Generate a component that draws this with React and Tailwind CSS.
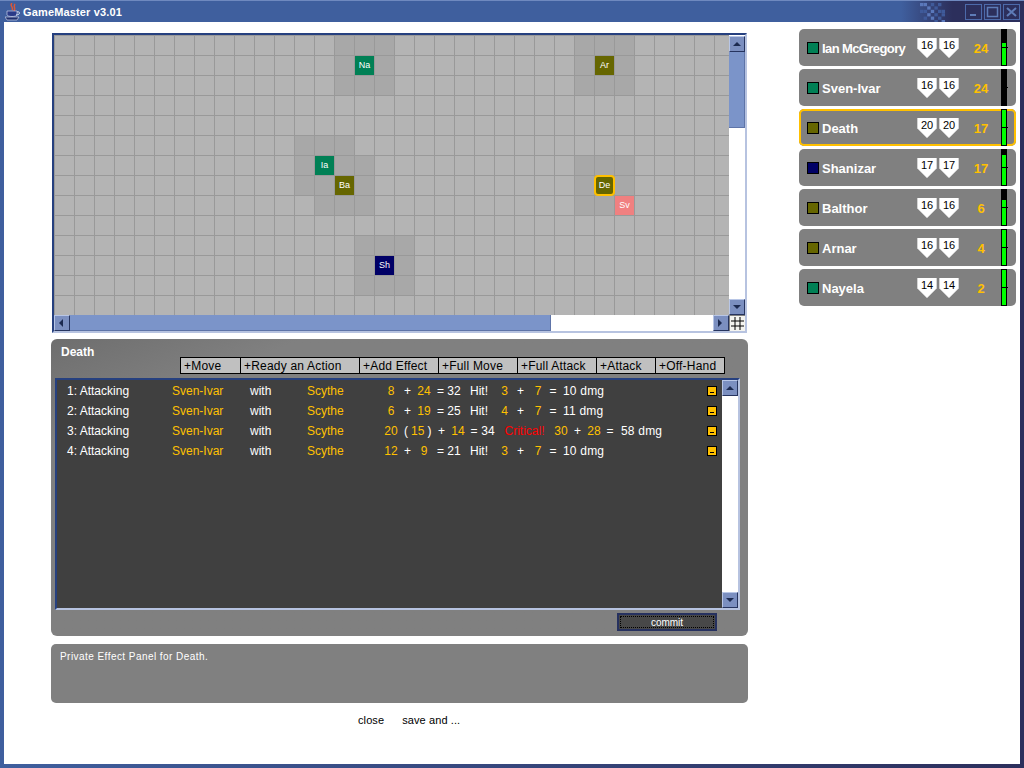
import React from "react";

const tokens = {
  "1-15": { t: "Na", c: "bg-[#008055]" },
  "1-27": { t: "Ar", c: "bg-[#666600]" },
  "6-13": { t: "Ia", c: "bg-[#008055]" },
  "7-14": { t: "Ba", c: "bg-[#666600]" },
  "7-27": { t: "De", c: "bg-[#666600]", sel: true },
  "8-28": { t: "Sv", c: "bg-[#f08080]" },
  "11-16": { t: "Sh", c: "bg-[#000066]" },
};
const centres = [[1, 15], [1, 27], [6, 13], [7, 14], [7, 27], [11, 16]];
const isDark = (r, c) => centres.some(([a, b]) => Math.abs(a - r) <= 1 && Math.abs(b - c) <= 1);

function Arrow({ dir }) {
  const pts = { up: "1,6 5,2 9,6", down: "1,2 5,6 9,2", left: "6,0 2,4 6,8", right: "2,0 6,4 2,8" }[dir];
  return (
    <svg width="10" height="8" viewBox="0 0 10 8" className="block">
      <polygon points={pts} fill="#1c2a50" />
    </svg>
  );
}

function ScrollBtn({ dir }) {
  return (
    <div className="w-4 h-4 shrink-0 flex items-center justify-center bg-[#7b8fc0] border-t border-l border-t-[#b8c6e6] border-l-[#b8c6e6] border-r border-b border-r-[#26345f] border-b-[#26345f]">
      <Arrow dir={dir} />
    </div>
  );
}

function MapView() {
  const rows = Array.from({ length: 14 }, (_, i) => i);
  const cols = Array.from({ length: 34 }, (_, i) => i);
  return (
    <div className="mx-px h-[300px] border-2 border-t-[#26407f] border-l-[#26407f] border-r-[#b7c3e0] border-b-[#b7c3e0] flex flex-col">
      <div className="flex h-[280px]">
        <div className="w-[675px] h-[280px] overflow-hidden grid grid-cols-[repeat(34,20px)] grid-rows-[repeat(14,20px)] shrink-0">
          {rows.map((r) =>
            cols.map((c) => {
              const tok = tokens[`${r}-${c}`];
              return (
                <div
                  key={`${r}-${c}`}
                  className={`relative w-5 h-5 border-l border-t border-[#999999] ${isDark(r, c) ? "bg-[#a8a8a8]" : "bg-[#b4b4b4]"}`}
                >
                  {tok && !tok.sel && (
                    <div className={`w-[19px] h-[19px] flex items-center justify-center pt-px text-white text-[9px] ${tok.c}`}>{tok.t}</div>
                  )}
                  {tok && tok.sel && (
                    <div className={`absolute -left-px -top-px z-10 w-[21px] h-[21px] border-2 border-[#ffc000] rounded-[4px] flex items-center justify-center pt-px text-white text-[9px] ${tok.c}`}>{tok.t}</div>
                  )}
                </div>
              );
            })
          )}
        </div>
        <div className="w-4 flex flex-col bg-white pt-px">
          <ScrollBtn dir="up" />
          <div className="h-[76px] bg-[#7b94c9] border-r border-b border-[#5e74a8]" />
          <div className="flex-1" />
          <ScrollBtn dir="down" />
        </div>
      </div>
      <div className="flex h-4">
        <ScrollBtn dir="left" />
        <div className="w-[481px] bg-[#7b94c9] border-r border-b border-[#5e74a8]" />
        <div className="flex-1 bg-white" />
        <ScrollBtn dir="right" />
        <div className="w-4 h-4 bg-[#f4f4f0] border-t border-l border-[#808080] flex items-center justify-center">
          <svg width="13" height="13" viewBox="0 0 13 13" className="block">
            <path d="M4 0V13M9 0V13M0 4H13M0 9H13" stroke="#000" strokeWidth="1" />
          </svg>
        </div>
      </div>
    </div>
  );
}

const Y = "text-[#ffc000]";
const rowsA = [
  ["1", "8", "24", "32", "3", "7", "10 dmg"],
  ["2", "6", "19", "25", "4", "7", "11 dmg"],
  null,
  ["4", "12", "9", "21", "3", "7", "10 dmg"],
];

function RowStart({ n }) {
  return (
    <>
      <span className="w-[115px] pl-[10px]">{n}: Attacking</span>
      <span className={`w-[78px] ${Y}`}>Sven-Ivar</span>
      <span className="w-[57px]">with</span>
      <span className={`w-[74px] ${Y}`}>Scythe</span>
    </>
  );
}

function Minus() {
  return (
    <div className="ml-auto mr-[5px] w-[10px] h-[10px] bg-[#ffc000] border border-black flex items-end justify-center pb-[2px] shrink-0">
      <div className="w-1 h-px bg-black" />
    </div>
  );
}

function RowA({ d }) {
  return (
    <div className="flex items-center h-5 text-center whitespace-nowrap">
      <div className="text-left flex"><RowStart n={d[0]} /></div>
      <span className={`w-5 ${Y}`}>{d[1]}</span>
      <span className="w-[13px]">+</span>
      <span className={`w-5 ${Y}`}>{d[2]}</span>
      <span className="w-[13px]">=</span>
      <span className="w-[14px]">{d[3]}</span>
      <span className="w-[34px] text-left pl-[9px]">Hit!</span>
      <span className={`w-[19px] ${Y}`}>{d[4]}</span>
      <span className="w-[13px]">+</span>
      <span className={`w-[22px] ${Y}`}>{d[5]}</span>
      <span className="w-2">=</span>
      <span className="pl-[6px] tracking-[0.2px]">{d[6]}</span>
      <Minus />
    </div>
  );
}

function RowCrit() {
  return (
    <div className="flex items-center h-5 text-center whitespace-nowrap">
      <div className="text-left flex"><RowStart n="3" /></div>
      <span className={`w-5 ${Y}`}>20</span>
      <span className="w-[10px]">(</span>
      <span className={`w-[13px] ${Y}`}>15</span>
      <span className="w-[11px]">)</span>
      <span className="w-[13px]">+</span>
      <span className={`w-5 ${Y}`}>14</span>
      <span className="w-3">=</span>
      <span className="w-4">34</span>
      <span className="w-[57px] text-[#ff0000]">Critical!</span>
      <span className={`w-4 ${Y}`}>30</span>
      <span className="w-[17px]">+</span>
      <span className={`w-4 ${Y}`}>28</span>
      <span className="w-4">=</span>
      <span className="pl-[3px] tracking-[0.2px]">58 dmg</span>
      <Minus />
    </div>
  );
}

const actions = [
  ["+Move", "w-[61px]"],
  ["+Ready an Action", "w-[120px]"],
  ["+Add Effect", "w-[80px]"],
  ["+Full Move", "w-[80px]"],
  ["+Full Attack", "w-[80px]"],
  ["+Attack", "w-[60px]"],
  ["+Off-Hand", "w-[70px]"],
];

function ActionPanel() {
  return (
    <div className="h-[297px] rounded-[6px] bg-linear-to-br from-[#6e6e6e] to-[#808080] to-[18%] flex flex-col">
      <div className="h-[18px] pl-[10px] pt-[6px] text-white font-bold text-xs leading-[15px]">Death</div>
      <div className="flex ml-[129px] h-[17px] text-black text-xs tracking-[0.2px]">
        {actions.map(([t, w]) => (
          <div key={t} className={`${w} h-[17px] bg-[#c0c0c0] border border-black pl-[3px] leading-[16px] -mr-px whitespace-nowrap`}>{t}</div>
        ))}
      </div>
      <div className="ml-1 mt-1 w-[685px] h-[232px] border-2 border-t-[#26407f] border-l-[#26407f] border-r-[#b7c3e0] border-b-[#b7c3e0] flex">
        <div className="w-[665px] bg-[#404040] text-white text-xs pt-px">
          {rowsA.map((d, i) => (d ? <RowA key={i} d={d} /> : <RowCrit key={i} />))}
        </div>
        <div className="w-4 bg-white flex flex-col justify-between">
          <ScrollBtn dir="up" />
          <ScrollBtn dir="down" />
        </div>
      </div>
      <div className="flex justify-end mt-[3px] mr-[31px]">
        <div className="w-[100px] h-[18px] border-2 border-[#26315f] bg-[#484848] p-px">
          <div className="h-full border border-dotted border-black text-white text-[10px] leading-[11px] text-center">commit</div>
        </div>
      </div>
    </div>
  );
}

function Shield({ v }) {
  return (
    <div className="relative w-5 h-5 flex justify-center text-[11px] leading-[15px] text-black">
      <svg width="20" height="20" viewBox="0 0 20 20" className="absolute inset-0">
        <path d="M0 0H20V10L10 20L0 10Z" fill="#ffffff" />
        <path d="M0 0H1V10.5L10 19.5L19 10.5V0H20V10L10 20L0 10Z" fill="#d4d4d4" />
      </svg>
      <span className="relative">{v}</span>
    </div>
  );
}

const cards = [
  { n: "Ian McGregory", c: "bg-[#008055]", s: 16, i: 24, top: "h-[13px]", fill: "flex-1", tr: "tracking-[-0.6px]" },
  { n: "Sven-Ivar", c: "bg-[#008055]", s: 16, i: 24, top: "flex-1", fill: "h-0" },
  { n: "Death", c: "bg-[#666600]", s: 20, i: 17, sel: true, top: "h-0", fill: "flex-1" },
  { n: "Shanizar", c: "bg-[#000066]", s: 17, i: 17, top: "h-[5px]", fill: "flex-1" },
  { n: "Balthor", c: "bg-[#666600]", s: 16, i: 6, top: "h-[10px]", fill: "flex-1" },
  { n: "Arnar", c: "bg-[#666600]", s: 16, i: 4, top: "h-0", fill: "flex-1" },
  { n: "Nayela", c: "bg-[#008055]", s: 14, i: 2, top: "h-0", fill: "flex-1" },
];

function Card({ d }) {
  return (
    <div className={`h-[37px] rounded-[5px] bg-[#808080] flex items-stretch pl-2 pr-2 ${d.sel ? "outline-2 -outline-offset-2 outline-[#ffc000]" : ""}`}>
      <div className="flex items-center shrink-0">
        <div className={`w-3 h-3 border border-black ${d.c}`} />
        <div className={`w-[98px] pl-[3px] pt-[2px] text-white font-bold text-[13px] ${d.tr || ""}`}>{d.n}</div>
        <div className="flex gap-[2px]">
          <Shield v={d.s} />
          <Shield v={d.s} />
        </div>
        <div className="w-[44px] pt-[2px] text-center text-[#ffc000] font-bold text-[13px]">{d.i}</div>
      </div>
      <div className="relative -ml-[2px] w-[6px] border border-black bg-black flex flex-col">
        <div className={d.top} />
        <div className={`${d.fill} bg-[#00ff00]`} />
        <div className="absolute left-0 top-[17px] w-[6px] h-px bg-black" />
      </div>
    </div>
  );
}

function JavaIcon() {
  return (
    <svg width="16" height="18" viewBox="0 0 16 18" className="block shrink-0">
      <path d="M7 0C4 3 9 4 7 7M10 1C8 4 11 5 9 8" stroke="#d9583a" strokeWidth="1.5" fill="none" />
      <path d="M2 8H12V12C11 14 3 14 2 12Z" fill="#2a3a88" stroke="#dfe4f5" strokeWidth="0.6" />
      <path d="M12 9C15.5 8 15.5 12 11 12" stroke="#dfe4f5" fill="none" />
      <path d="M0 14H14L12 17H2Z" fill="#20306e" stroke="#dfe4f5" strokeWidth="0.6" />
    </svg>
  );
}

const dither = [
  [0, 0], [2, 0], [4, 0], [1, 1], [3, 1], [0, 2], [2, 2], [4, 2], [5, 2], [1, 3], [3, 3], [5, 3], [-1, 0], [-1, 2], [0, 4], [2, 4], [4, 4], [3, 5], [5, 5],
];

function TitleBtn({ children }) {
  return (
    <div className="w-[17px] h-4 border border-[#4c6aaa] flex items-center justify-center">
      <svg width="13" height="12" viewBox="0 0 13 12" className="block">{children}</svg>
    </div>
  );
}

export default function App() {
  return (
    <div className="w-[1024px] h-[768px] flex flex-col overflow-hidden font-['Liberation_Sans',sans-serif] bg-[#2c2f5c]">
      <div className="h-[22px] flex items-center pl-[5px] pr-[4px] border-t border-[#6f89bf] bg-linear-to-r from-[#3f5f9e] from-[88%] to-[#2c2f5c] to-[93%] shrink-0">
        <JavaIcon />
        <span className="ml-[2px] pt-px text-white font-bold text-[11px] tracking-[0.15px]">GameMaster v3.01</span>
        <svg width="26" height="20" viewBox="0 0 26 20" className="ml-auto mr-[19px] block">
          {dither.map(([x, y], i) => (
            <rect key={i} x={(x + 1) * 3.6} y={y * 3.4 + 1} width="3.4" height="3.2" fill={i % 3 === 0 ? "#5a78bb" : "#3f5a9a"} />
          ))}
        </svg>
        <div className="flex gap-[2px]">
          <TitleBtn><rect x="3" y="8" width="6" height="2" fill="#5e7cb8" /></TitleBtn>
          <TitleBtn><rect x="1.5" y="1.5" width="10" height="9" fill="none" stroke="#5e7cb8" strokeWidth="1.5" /></TitleBtn>
          <TitleBtn><path d="M2 2L11 10M11 2L2 10" stroke="#5e7cb8" strokeWidth="2" /></TitleBtn>
        </div>
      </div>
      <div className="flex-1 flex bg-linear-to-r from-[#3f5f9e] to-[#2c2f5c] px-1 pb-1 min-h-0">
        <div className="flex-1 bg-white flex pl-[47px]">
          <div className="w-[697px] pt-[11px] shrink-0">
            <MapView />
            <div className="mt-[6px]"><ActionPanel /></div>
            <div className="mt-2 h-[59px] rounded-[5px] bg-[#808080] text-white text-[10px] tracking-[0.45px] pl-[9px] pt-[5px]">Private Effect Panel for Death.</div>
            <div className="flex mt-[9px] pl-[307px] text-[11px] tracking-[0.1px] text-black gap-[18px]">
              <span>close</span>
              <span>save and ...</span>
            </div>
          </div>
          <div className="ml-[51px] w-[217px] pt-[7px] flex flex-col gap-[3px] shrink-0">
            {cards.map((d) => <Card key={d.n} d={d} />)}
          </div>
        </div>
      </div>
    </div>
  );
}
